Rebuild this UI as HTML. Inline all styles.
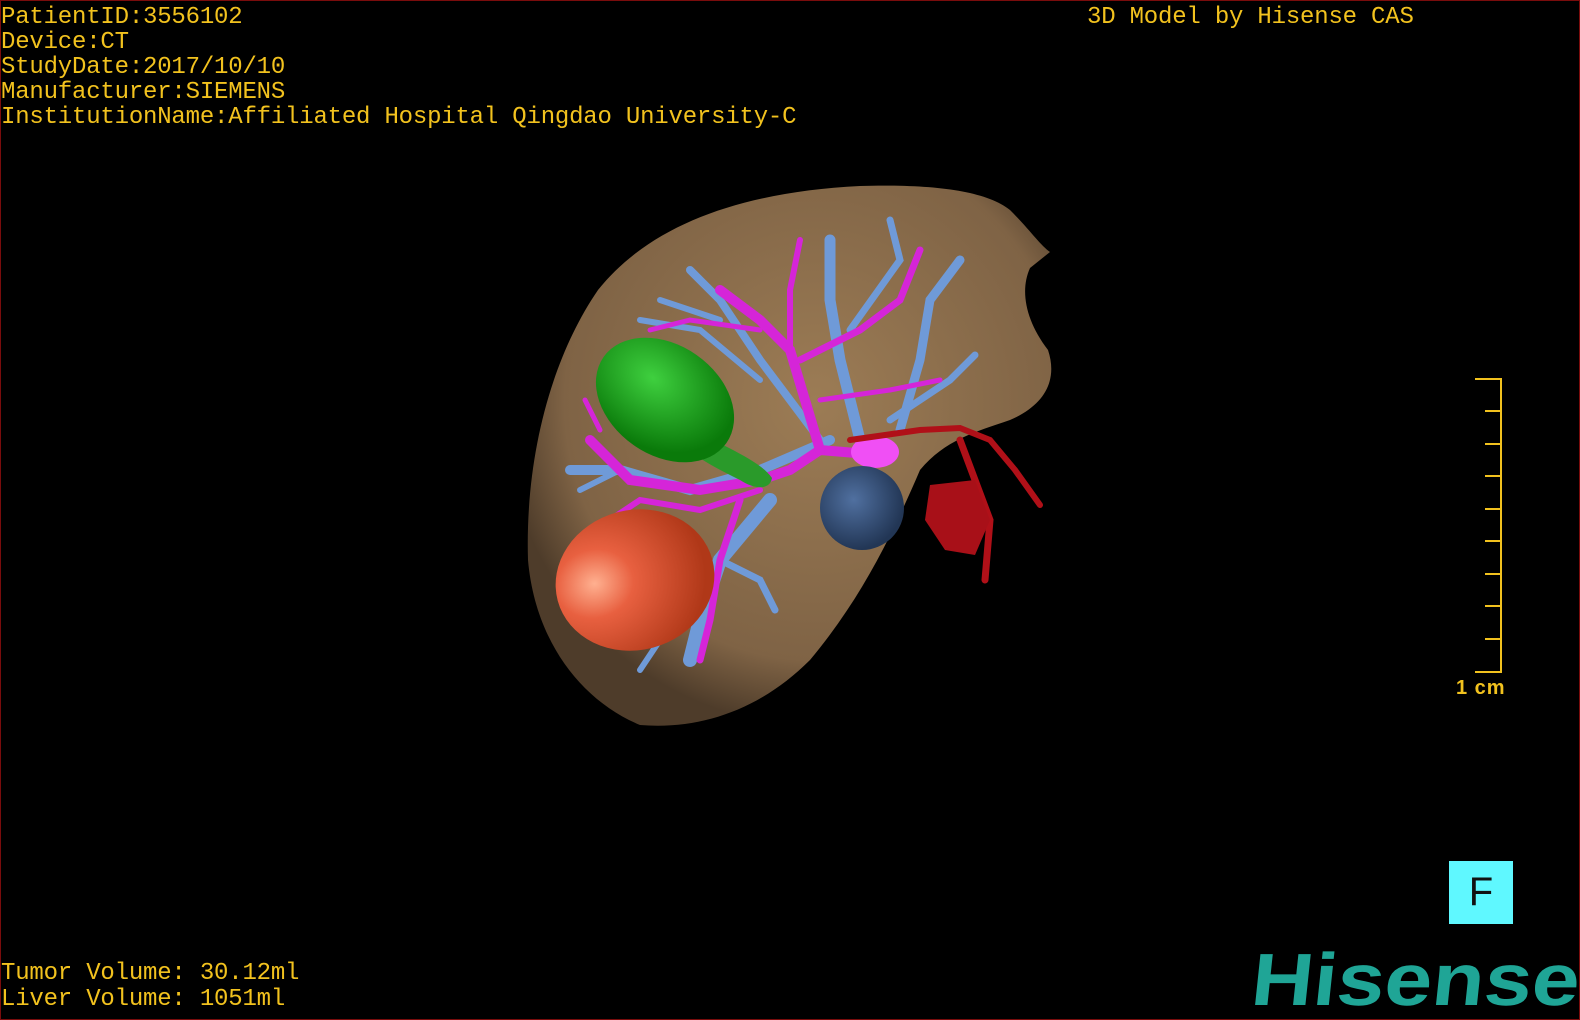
<!DOCTYPE html>
<html><head><meta charset="utf-8"><style>
html,body{margin:0;padding:0;background:#000;}
body{width:1580px;height:1020px;position:relative;overflow:hidden;}
.frame{position:absolute;left:0;top:0;width:1578px;height:1018px;border:1px solid #7a0c0c;}
.t{position:absolute;font-family:"Liberation Mono",monospace;font-size:24px;color:#f2c21e;line-height:25px;white-space:pre;letter-spacing:-0.2px}
.F{position:absolute;left:1449px;top:861px;width:64px;height:63px;background:#5ff8ff;color:#111;font-family:"Liberation Sans",sans-serif;font-size:40px;text-align:center;line-height:63px}
</style></head><body>
<div class="frame"></div>
<div class="t" style="left:1px;top:5px">PatientID:3556102
Device:CT
StudyDate:2017/10/10
Manufacturer:SIEMENS
InstitutionName:Affiliated Hospital Qingdao University-C</div>
<div class="t" style="left:1087px;top:5px">3D Model by Hisense CAS</div>
<div class="t" style="left:1px;top:961px;line-height:26px">Tumor Volume: 30.12ml
Liver Volume: 1051ml</div>
<svg style="position:absolute;left:0;top:0" width="1580" height="1020">
<defs>
<radialGradient id="lv" cx="0.55" cy="0.4" r="0.6"><stop offset="0" stop-color="#9c7c55"/><stop offset="0.8" stop-color="#7f6345"/><stop offset="1" stop-color="#4e3c2a"/></radialGradient>
<radialGradient id="gr" cx="0.35" cy="0.4" r="0.6"><stop offset="0" stop-color="#3fd03f"/><stop offset="1" stop-color="#0a7a0a"/></radialGradient>
<radialGradient id="tu" cx="0.25" cy="0.45" r="0.7"><stop offset="0" stop-color="#ffb090"/><stop offset="0.35" stop-color="#e86040"/><stop offset="1" stop-color="#b03818"/></radialGradient>
<radialGradient id="db" cx="0.4" cy="0.4" r="0.6"><stop offset="0" stop-color="#5070a0"/><stop offset="1" stop-color="#223655"/></radialGradient>
</defs>
<path d="M598,290 C650,225 740,192 860,186 C930,184 985,190 1010,210 C1030,230 1040,245 1050,252 L1030,268 C1020,290 1025,320 1048,350 C1058,380 1045,405 1010,420 C975,432 945,440 920,470 C890,540 860,600 810,660 C760,710 700,730 640,725 C580,700 535,640 528,560 C525,460 550,360 598,290 Z" fill="url(#lv)"/>
<g stroke="#6f9ad8" stroke-linecap="round" fill="none">
<path d="M770,500 L720,560 L700,620 L690,660" stroke-width="14"/>
<path d="M830,440 L760,470 L690,490 L620,470 L570,470" stroke-width="10"/>
<path d="M860,440 L840,360 L830,300 L830,240" stroke-width="11"/>
<path d="M900,430 L920,360 L930,300 L960,260" stroke-width="9"/>
<path d="M820,440 L760,360 L720,300 L690,270" stroke-width="8"/>
<path d="M720,320 L660,300" stroke-width="6"/>
<path d="M890,420 L950,380 L975,355" stroke-width="7"/>
<path d="M850,330 L900,260 L890,220" stroke-width="7"/>
<path d="M760,380 L700,330 L640,320" stroke-width="6"/>
<path d="M720,560 L760,580 L775,610" stroke-width="7"/>
<path d="M700,600 L660,640 L640,670" stroke-width="6"/>
<path d="M620,470 L580,490" stroke-width="6"/>
</g>
<g stroke="#d525d8" stroke-linecap="round" fill="none">
<path d="M880,455 L820,450 L790,470 L760,480 L700,490 L630,480 L590,440" stroke-width="10"/>
<path d="M820,450 L805,400 L790,350 L760,320 L720,290" stroke-width="10"/>
<path d="M800,360 L860,330 L900,300 L920,250" stroke-width="7"/>
<path d="M790,350 L790,290 L800,240" stroke-width="6"/>
<path d="M740,500 L720,560 L710,620 L700,660" stroke-width="7"/>
<path d="M760,490 L700,510 L640,500 L610,520" stroke-width="6"/>
<path d="M820,400 L890,390 L940,380" stroke-width="5"/>
<path d="M760,330 L690,320 L650,330" stroke-width="5"/>
<path d="M600,430 L585,400" stroke-width="5"/>
</g>
<ellipse cx="875" cy="452" rx="24" ry="16" fill="#f04ff5"/>
<circle cx="862" cy="508" r="42" fill="url(#db)"/>
<path d="M695,430 C720,445 760,460 772,478 C770,490 755,490 740,480 C720,470 700,460 690,450 Z" fill="#2a9a2a"/>
<g transform="rotate(35 665 400)"><ellipse cx="665" cy="400" rx="75" ry="55" fill="url(#gr)"/></g>
<g transform="rotate(-15 635 580)"><ellipse cx="635" cy="580" rx="80" ry="70" fill="url(#tu)"/></g>
<g stroke="#b01018" stroke-linecap="round" fill="none">
<path d="M850,440 L920,430 L960,428 L990,440 L1015,470 L1040,505" stroke-width="6"/>
<path d="M960,440 L975,480 L990,520 L985,580" stroke-width="7"/>
</g>
<path d="M930,485 L975,480 L990,520 L975,555 L945,550 L925,520 Z" fill="#a81018"/>
<g stroke="#f2c21e" stroke-width="2" fill="none">
<path d="M1475,379 H1501 V672 H1475"/>
<path d="M1485,411 H1501 M1485,444 H1501 M1485,476 H1501 M1485,509 H1501 M1485,541 H1501 M1485,574 H1501 M1485,606 H1501 M1485,639 H1501"/>
</g>
<text x="1456" y="694" fill="#f2c21e" font-family="Liberation Sans,sans-serif" font-size="20" font-weight="bold" letter-spacing="1">1 cm</text>
<text x="1250" y="1005" fill="#1fa596" font-family="Liberation Sans,sans-serif" font-weight="bold" font-size="74" textLength="328" lengthAdjust="spacingAndGlyphs" transform="skewX(-6) translate(105 0)">Hisense</text>
</svg>
<div class="F">F</div>
</body></html>
